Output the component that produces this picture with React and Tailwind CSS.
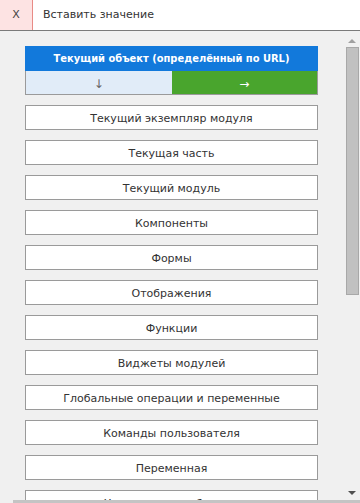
import React from "react";

const items = [
  "Текущий экземпляр модуля",
  "Текущая часть",
  "Текущий модуль",
  "Компоненты",
  "Формы",
  "Отображения",
  "Функции",
  "Виджеты модулей",
  "Глобальные операции и переменные",
  "Команды пользователя",
  "Переменная",
  "Управляющие объекты",
];

export default function App() {
  return (
    <div
      className="w-[360px] h-[503px] overflow-hidden flex flex-col bg-[#f0f0f0] text-[#333]"
      style={{ fontFamily: '"DejaVu Sans", Verdana, sans-serif' }}
    >
      <div className="h-[31px] shrink-0 flex bg-white border-b border-[#7a7a7a]">
        <div className="w-[33px] bg-[#fde3e3] border-r border-[#e88b86] flex items-center justify-center text-[11px] text-[#444]">
          X
        </div>
        <div className="flex items-center pl-[10px] text-[11px] text-[#333]">
          Вставить значение
        </div>
      </div>
      <div className="flex-1 flex min-h-0">
        <div className="flex-1 min-w-0 pl-[25px] pr-[26px] pt-[15px] overflow-hidden">
          <div className="flex flex-col">
            <div
              className="h-[25px] pt-[2px] bg-[#1279db] text-white font-bold text-[11px] flex items-center justify-center"
              style={{ fontFamily: '"DejaVu Sans Condensed", "DejaVu Sans", sans-serif' }}
            >
              Текущий объект (определённый по URL)
            </div>
            <div className="h-[24px] flex border border-t-0 border-[#9a9a9a]">
              <div className="flex-1 bg-[#e1ecf8] pt-[2px] flex items-center justify-center text-[12px] text-[#666]">
                ↓
              </div>
              <div className="flex-1 bg-[#49a52d] pt-[2px] flex items-center justify-center text-[12px] text-white">
                →
              </div>
            </div>
          </div>
          <div className="mt-[10px] flex flex-col gap-[10px]">
            {items.map((t) => (
              <div
                key={t}
                className="h-[25px] shrink-0 pt-[3px] bg-white border border-[#9a9a9a] flex items-center justify-center text-[11px] text-[#333] whitespace-nowrap"
              >
                {t}
              </div>
            ))}
          </div>
        </div>
        <div className="w-[16px] shrink-0 flex flex-col items-center pt-[8px] pb-[5px]">
          <svg width="8" height="4" viewBox="0 0 8 4">
            <path d="M0 4 L4 0 L8 4 Z" fill="#a0a0a0" />
          </svg>
          <div className="mt-[4px] w-[13px] h-[248px] bg-[#c1c1c1] border border-[#a8a8a8]" />
          <div className="flex-1" />
          <svg width="8" height="4" viewBox="0 0 8 4">
            <path d="M0 0 L8 0 L4 4 Z" fill="#505050" />
          </svg>
        </div>
      </div>
      <div className="h-[3px] shrink-0 flex">
        <div className="w-[13px]" />
        <div className="flex-1 bg-[#c4c4c4]" />
        <div className="w-[16px] bg-[#c4c4c4]" />
      </div>
    </div>
  );
}
